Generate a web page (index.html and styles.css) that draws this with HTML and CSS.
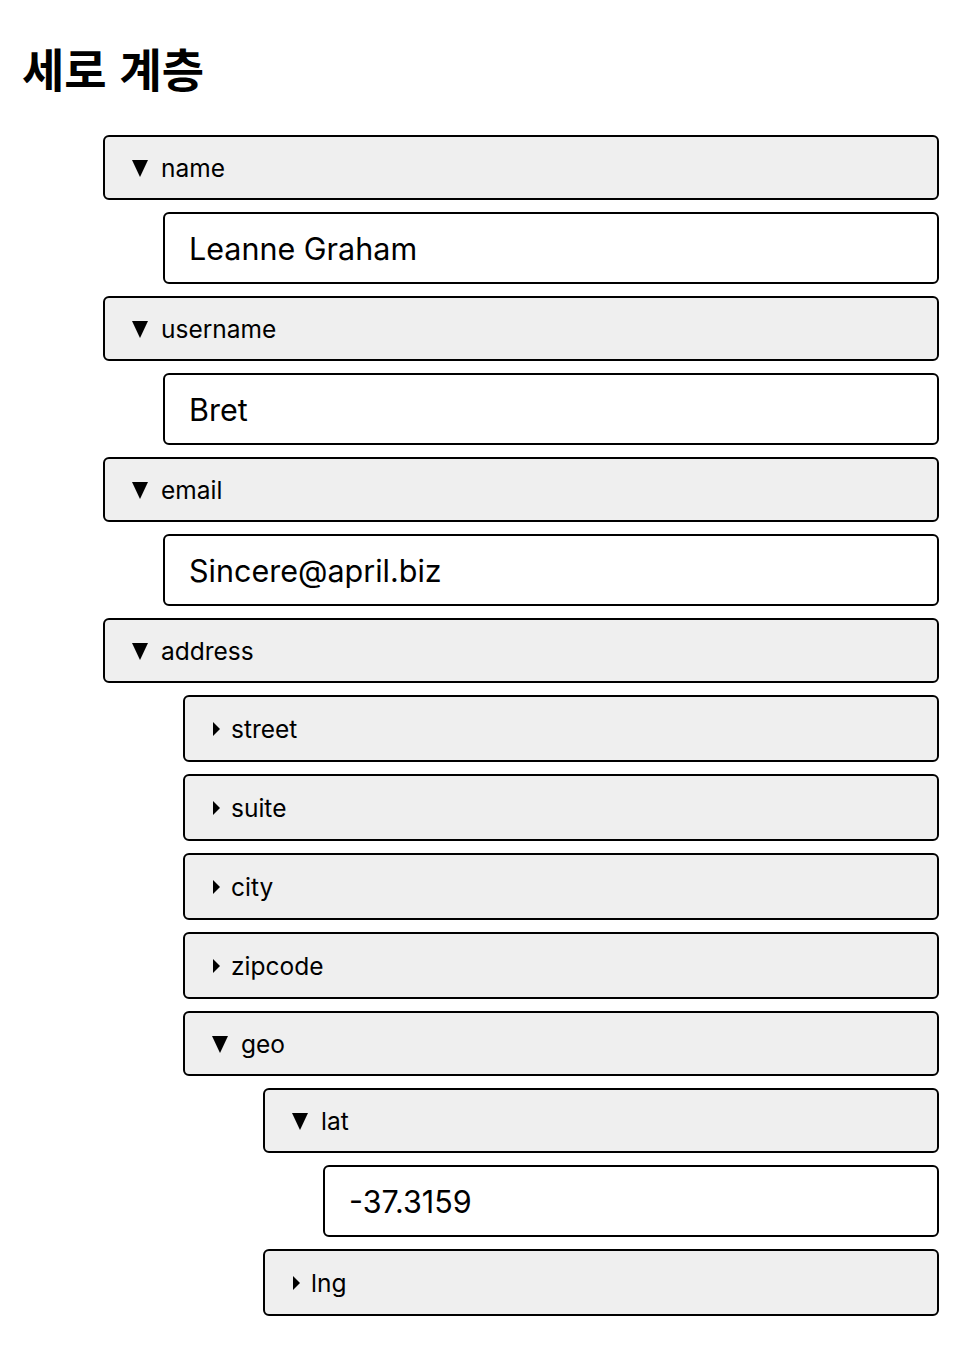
FILE: index.html
```html
<!DOCTYPE html>
<html lang="ko">
<head>
<meta charset="utf-8">
<title>세로 계층</title>
<link rel="stylesheet" href="styles.css">
</head>
<body>
<h1 class="title">세로 계층</h1>
<div class="tree">
  <div class="node">
    <div class="head open"><span class="caret-down"></span><span class="label">name</span></div>
    <div class="value">Leanne Graham</div>
  </div>
  <div class="node">
    <div class="head open"><span class="caret-down"></span><span class="label">username</span></div>
    <div class="value">Bret</div>
  </div>
  <div class="node">
    <div class="head open"><span class="caret-down"></span><span class="label">email</span></div>
    <div class="value">Sincere@april.biz</div>
  </div>
  <div class="node">
    <div class="head open"><span class="caret-down"></span><span class="label">address</span></div>
    <div class="node sub">
      <div class="head closed"><span class="caret-right"></span><span class="label">street</span></div>
    </div>
    <div class="node sub">
      <div class="head closed"><span class="caret-right"></span><span class="label">suite</span></div>
    </div>
    <div class="node sub">
      <div class="head closed"><span class="caret-right"></span><span class="label">city</span></div>
    </div>
    <div class="node sub">
      <div class="head closed"><span class="caret-right"></span><span class="label">zipcode</span></div>
    </div>
    <div class="node sub">
      <div class="head open"><span class="caret-down"></span><span class="label">geo</span></div>
      <div class="node sub">
        <div class="head open"><span class="caret-down"></span><span class="label">lat</span></div>
        <div class="value">-37.3159</div>
      </div>
      <div class="node sub">
        <div class="head closed"><span class="caret-right"></span><span class="label">lng</span></div>
      </div>
    </div>
  </div>
</div>
</body>
</html>
```

FILE: styles.css
```css
html, body {
  margin: 0;
  padding: 0;
  background: #ffffff;
}

body {
  font-family: Inter, "Noto Sans CJK KR", sans-serif;
  color: #000000;
  padding: 0 29px 40px 22px;
}

.title {
  margin: 0 0 36px 0;
  padding-top: 36px;
  font-family: "Noto Sans CJK KR", sans-serif;
  font-weight: 700;
  font-size: 46px;
  line-height: 63px;
}

.tree {
  display: flex;
  flex-direction: column;
  gap: 12px;
  margin-left: 81px;
}

.node {
  display: flex;
  flex-direction: column;
  gap: 12px;
}

.node.sub {
  margin-left: 80px;
}

.head {
  box-sizing: border-box;
  display: flex;
  align-items: center;
  background: #efefef;
  border: 2px solid #000000;
  border-radius: 6px;
  padding-left: 27px;
  font-size: 24.5px;
}

.head.open {
  height: 65px;
}

.head.closed {
  height: 67px;
  padding-left: 28px;
}

.caret-down {
  width: 0;
  height: 0;
  border-left: 8.5px solid transparent;
  border-right: 8.5px solid transparent;
  border-top: 17px solid #000000;
  margin-right: 13px;
  margin-top: 1px;
}

.caret-right {
  width: 0;
  height: 0;
  border-top: 7px solid transparent;
  border-bottom: 7px solid transparent;
  border-left: 7.5px solid #000000;
  margin-right: 11px;
}

.label {
  line-height: 30px;
}

.value {
  box-sizing: border-box;
  height: 72px;
  margin-left: 60px;
  display: flex;
  align-items: center;
  border: 2px solid #000000;
  border-radius: 6px;
  padding-left: 24px;
  font-size: 30.5px;
  background: #ffffff;
}
```
